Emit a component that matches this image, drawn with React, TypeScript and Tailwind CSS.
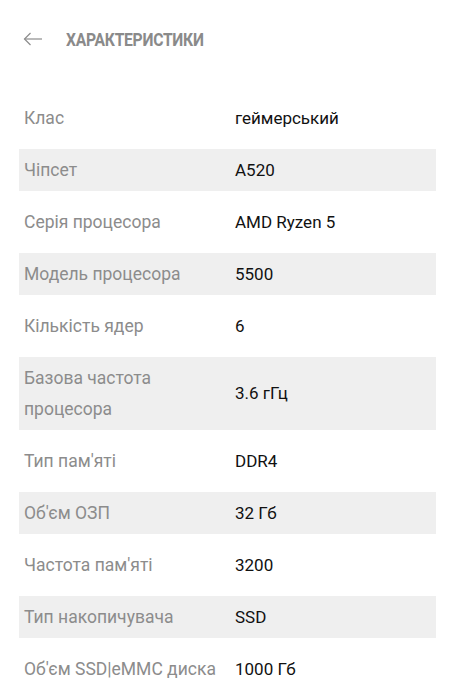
const specs: [string, string][] = [
  ["Клас", "геймерський"],
  ["Чіпсет", "A520"],
  ["Серія процесора", "AMD Ryzen 5"],
  ["Модель процесора", "5500"],
  ["Кількість ядер", "6"],
  ["Базова частота процесора", "3.6 гГц"],
  ["Тип пам'яті", "DDR4"],
  ["Об'єм ОЗП", "32 Гб"],
  ["Частота пам'яті", "3200"],
  ["Тип накопичувача", "SSD"],
  ["Об'єм SSD|eMMC диска", "1000 Гб"],
];

function BackArrow() {
  return (
    <svg width="20" height="14" viewBox="0 0 20 14" fill="none" stroke="#8c8c8c" strokeWidth="1.2">
      <path d="M19 7H1.5" />
      <path d="M7.5 1L1.5 7l6 6" />
    </svg>
  );
}

export default function App() {
  return (
    <div className="min-h-screen bg-white px-[19px] font-['Roboto',sans-serif] overflow-hidden">
      <div className="h-[78px] flex items-center">
        <div className="pl-[4px] w-[47px]">
          <BackArrow />
        </div>
        <h1 className="text-[18px] font-bold uppercase text-[#8a8a8a] tracking-[-0.3px] scale-x-[0.87] origin-left">
          Характеристики
        </h1>
      </div>
      <div className="mt-[19px] flex flex-col gap-[10px]">
        {specs.map(([label, value], i) => (
          <div
            key={label}
            className={`flex items-center py-[5.5px] leading-[31px] ${
              i % 2 === 1 ? "bg-[#efefef]" : ""
            }`}
          >
            <div className="w-[216px] shrink-0 pl-[5px] pr-[20px] text-[17.5px] text-[#8c8c8c]">
              <span className={label.includes("SSD") ? "whitespace-nowrap" : ""}>{label}</span>
            </div>
            <div className="flex-1 text-[17px] text-[#111]">{value}</div>
          </div>
        ))}
        <div className="h-[42px] bg-[#efefef]" />
      </div>
    </div>
  );
}
